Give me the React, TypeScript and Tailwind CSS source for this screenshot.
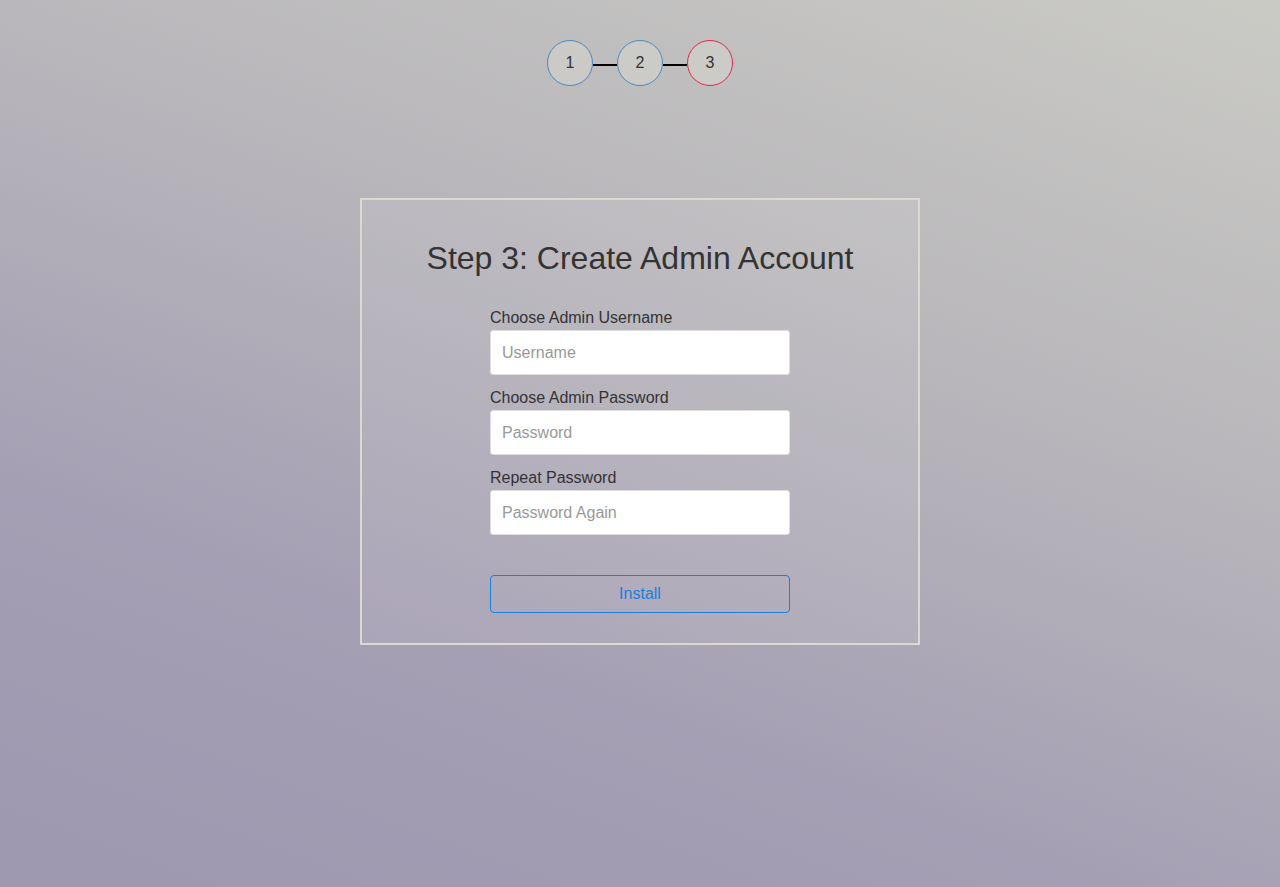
import React from 'react';

const steps = [
  { n: 1, active: false },
  { n: 2, active: false },
  { n: 3, active: true },
];

const fields = [
  { label: 'Choose Admin Username', placeholder: 'Username', type: 'text' },
  { label: 'Choose Admin Password', placeholder: 'Password', type: 'password' },
  { label: 'Repeat Password', placeholder: 'Password Again', type: 'password' },
];

export default function App() {
  return (
    <div className="min-h-[887px] w-full bg-[linear-gradient(200deg,#cacac5_0%,#b9b7bb_35%,#a59fb4_70%,#9d97b0_100%)] font-['Liberation_Sans',Arial,sans-serif] text-[#333]">
      <div className="flex items-center justify-center pt-[40px]">
        {steps.map((s, i) => (
          <React.Fragment key={s.n}>
            {i > 0 && <div className="mt-[3px] h-[2px] w-[24px] bg-black" />}
            <div
              className={
                'flex h-[46px] w-[46px] items-center justify-center rounded-full border bg-[#d0d0cb]/70 text-[16px] ' +
                (s.active ? 'border-[#e3264b]' : 'border-[#4d88c2]')
              }
            >
              {s.n}
            </div>
          </React.Fragment>
        ))}
      </div>

      <div className="mx-auto mt-[112px] w-[560px] border-2 border-[#dcd9d0] bg-white/[0.08] pt-[36px] pb-[30px]">
        <h1 className="mb-[28px] text-center text-[32px] leading-[44px] whitespace-nowrap">
          Step 3: Create Admin Account
        </h1>
        <form className="mx-auto flex w-[300px] flex-col">
          {fields.map((f) => (
            <div key={f.label} className="mb-[13px] flex flex-col">
              <label className="mb-[2px] text-[16px] leading-[20px]">{f.label}</label>
              <input
                type={f.type}
                placeholder={f.placeholder}
                className="h-[45px] w-full rounded-[3px] border border-[#ddd] bg-white px-[11px] text-[16px] text-[#333] outline-none placeholder:text-[#999]"
              />
            </div>
          ))}
          <button
            type="button"
            className="mt-[27px] h-[38px] w-full rounded-[4px] border border-[#1a7fe0] text-[16px] text-[#1a7fe0]"
          >
            Install
          </button>
        </form>
      </div>
    </div>
  );
}
